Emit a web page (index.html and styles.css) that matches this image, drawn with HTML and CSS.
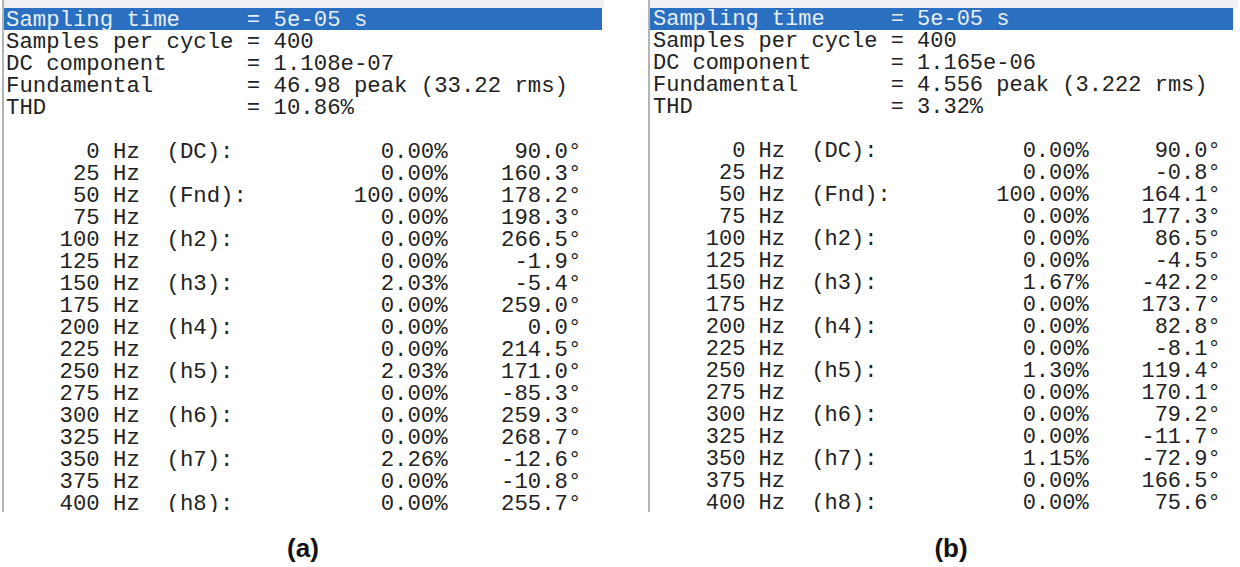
FILE: index.html
```html
<!DOCTYPE html>
<html>
<head>
<meta charset="utf-8">
<link rel="stylesheet" href="styles.css">
</head>
<body>
<div class="figure">
  <div class="col col-a">
    <div class="panel panel-a">
      <div class="topband"></div>
      <div class="line sel">Sampling time     = 5e-05 s</div>
      <div class="line">Samples per cycle = 400</div>
      <div class="line">DC component      = 1.108e-07</div>
      <div class="line">Fundamental       = 46.98 peak (33.22 rms)</div>
      <div class="line">THD               = 10.86%</div>
      <div class="line"> </div>
      <div class="row"><span class="f">0</span><span class="hz">Hz</span><span class="lb">(DC):</span><span class="p">0.00%</span><span class="ph">90.0°</span></div>
      <div class="row"><span class="f">25</span><span class="hz">Hz</span><span class="lb"></span><span class="p">0.00%</span><span class="ph">160.3°</span></div>
      <div class="row"><span class="f">50</span><span class="hz">Hz</span><span class="lb">(Fnd):</span><span class="p">100.00%</span><span class="ph">178.2°</span></div>
      <div class="row"><span class="f">75</span><span class="hz">Hz</span><span class="lb"></span><span class="p">0.00%</span><span class="ph">198.3°</span></div>
      <div class="row"><span class="f">100</span><span class="hz">Hz</span><span class="lb">(h2):</span><span class="p">0.00%</span><span class="ph">266.5°</span></div>
      <div class="row"><span class="f">125</span><span class="hz">Hz</span><span class="lb"></span><span class="p">0.00%</span><span class="ph">-1.9°</span></div>
      <div class="row"><span class="f">150</span><span class="hz">Hz</span><span class="lb">(h3):</span><span class="p">2.03%</span><span class="ph">-5.4°</span></div>
      <div class="row"><span class="f">175</span><span class="hz">Hz</span><span class="lb"></span><span class="p">0.00%</span><span class="ph">259.0°</span></div>
      <div class="row"><span class="f">200</span><span class="hz">Hz</span><span class="lb">(h4):</span><span class="p">0.00%</span><span class="ph">0.0°</span></div>
      <div class="row"><span class="f">225</span><span class="hz">Hz</span><span class="lb"></span><span class="p">0.00%</span><span class="ph">214.5°</span></div>
      <div class="row"><span class="f">250</span><span class="hz">Hz</span><span class="lb">(h5):</span><span class="p">2.03%</span><span class="ph">171.0°</span></div>
      <div class="row"><span class="f">275</span><span class="hz">Hz</span><span class="lb"></span><span class="p">0.00%</span><span class="ph">-85.3°</span></div>
      <div class="row"><span class="f">300</span><span class="hz">Hz</span><span class="lb">(h6):</span><span class="p">0.00%</span><span class="ph">259.3°</span></div>
      <div class="row"><span class="f">325</span><span class="hz">Hz</span><span class="lb"></span><span class="p">0.00%</span><span class="ph">268.7°</span></div>
      <div class="row"><span class="f">350</span><span class="hz">Hz</span><span class="lb">(h7):</span><span class="p">2.26%</span><span class="ph">-12.6°</span></div>
      <div class="row"><span class="f">375</span><span class="hz">Hz</span><span class="lb"></span><span class="p">0.00%</span><span class="ph">-10.8°</span></div>
      <div class="row"><span class="f">400</span><span class="hz">Hz</span><span class="lb">(h8):</span><span class="p">0.00%</span><span class="ph">255.7°</span></div>
    </div>
    <div class="caption cap-a">(a)</div>
  </div>
  <div class="col col-b">
    <div class="panel panel-b">
      <div class="topband"></div>
      <div class="line sel">Sampling time     = 5e-05 s</div>
      <div class="line">Samples per cycle = 400</div>
      <div class="line">DC component      = 1.165e-06</div>
      <div class="line">Fundamental       = 4.556 peak (3.222 rms)</div>
      <div class="line">THD               = 3.32%</div>
      <div class="line"> </div>
      <div class="row"><span class="f">0</span><span class="hz">Hz</span><span class="lb">(DC):</span><span class="p">0.00%</span><span class="ph">90.0°</span></div>
      <div class="row"><span class="f">25</span><span class="hz">Hz</span><span class="lb"></span><span class="p">0.00%</span><span class="ph">-0.8°</span></div>
      <div class="row"><span class="f">50</span><span class="hz">Hz</span><span class="lb">(Fnd):</span><span class="p">100.00%</span><span class="ph">164.1°</span></div>
      <div class="row"><span class="f">75</span><span class="hz">Hz</span><span class="lb"></span><span class="p">0.00%</span><span class="ph">177.3°</span></div>
      <div class="row"><span class="f">100</span><span class="hz">Hz</span><span class="lb">(h2):</span><span class="p">0.00%</span><span class="ph">86.5°</span></div>
      <div class="row"><span class="f">125</span><span class="hz">Hz</span><span class="lb"></span><span class="p">0.00%</span><span class="ph">-4.5°</span></div>
      <div class="row"><span class="f">150</span><span class="hz">Hz</span><span class="lb">(h3):</span><span class="p">1.67%</span><span class="ph">-42.2°</span></div>
      <div class="row"><span class="f">175</span><span class="hz">Hz</span><span class="lb"></span><span class="p">0.00%</span><span class="ph">173.7°</span></div>
      <div class="row"><span class="f">200</span><span class="hz">Hz</span><span class="lb">(h4):</span><span class="p">0.00%</span><span class="ph">82.8°</span></div>
      <div class="row"><span class="f">225</span><span class="hz">Hz</span><span class="lb"></span><span class="p">0.00%</span><span class="ph">-8.1°</span></div>
      <div class="row"><span class="f">250</span><span class="hz">Hz</span><span class="lb">(h5):</span><span class="p">1.30%</span><span class="ph">119.4°</span></div>
      <div class="row"><span class="f">275</span><span class="hz">Hz</span><span class="lb"></span><span class="p">0.00%</span><span class="ph">170.1°</span></div>
      <div class="row"><span class="f">300</span><span class="hz">Hz</span><span class="lb">(h6):</span><span class="p">0.00%</span><span class="ph">79.2°</span></div>
      <div class="row"><span class="f">325</span><span class="hz">Hz</span><span class="lb"></span><span class="p">0.00%</span><span class="ph">-11.7°</span></div>
      <div class="row"><span class="f">350</span><span class="hz">Hz</span><span class="lb">(h7):</span><span class="p">1.15%</span><span class="ph">-72.9°</span></div>
      <div class="row"><span class="f">375</span><span class="hz">Hz</span><span class="lb"></span><span class="p">0.00%</span><span class="ph">166.5°</span></div>
      <div class="row"><span class="f">400</span><span class="hz">Hz</span><span class="lb">(h8):</span><span class="p">0.00%</span><span class="ph">75.6°</span></div>
    </div>
    <div class="caption cap-b">(b)</div>
  </div>
</div>
</body>
</html>
```

FILE: styles.css
```css
html, body {
  margin: 0;
  padding: 0;
  background: #ffffff;
}

.figure {
  display: flex;
  gap: 44px;
  padding-left: 2px;
  width: 1240px;
  height: 567px;
  box-sizing: border-box;
}

.col {
  display: flex;
  flex-direction: column;
}

.col-a { width: 602px; }
.col-b { width: 590px; }

.panel {
  height: 512px;
  overflow: hidden;
  border-left: 2px solid #b4b4b4;
  box-sizing: border-box;
  font-family: "Liberation Mono", "Courier New", monospace;
  color: #222222;
  background: #ffffff;
}

.panel-a { font-size: 22.3px; }
.panel-b { font-size: 22px; }

.topband {
  height: 8px;
  background: #eef0f3;
}

.line {
  height: 22px;
  box-sizing: border-box;
  padding-top: 2px;
  line-height: 20px;
  white-space: pre;
}

.panel-a .line, .panel-a .row { padding-left: 2px; margin-right: 2px; }
.panel-b .line, .panel-b .row { padding-left: 3px; margin-right: 5px; }

.sel {
  background: #2b6fc1;
  color: #e6eefa;
}

.row {
  display: grid;
  grid-template-columns: 7ch 3ch 8ch 15ch 10ch;
  height: 22px;
  box-sizing: border-box;
  padding-top: 2px;
  line-height: 20px;
  white-space: pre;
}

.f { text-align: right; }
.hz { padding-left: 1ch; }
.lb { padding-left: 2ch; }
.p { text-align: right; }
.ph { text-align: right; }

.caption {
  margin-top: 21px;
  height: 30px;
  line-height: 30px;
  font-family: "Liberation Sans", Arial, sans-serif;
  font-weight: bold;
  font-size: 26px;
  color: #111111;
  text-align: center;
}

.cap-b { padding-left: 16px; }
```
